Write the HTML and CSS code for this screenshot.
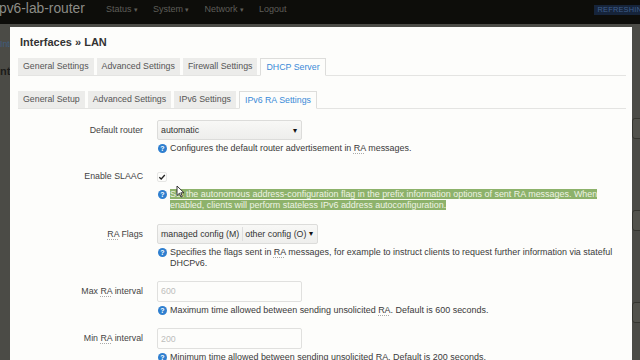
FILE: index.html
```html
<!DOCTYPE html>
<html lang="en">
  <head>
    <meta charset="UTF-8" />
    <meta name="viewport" content="width=device-width, initial-scale=1.0" />
    <title>Interfaces - LAN - LuCI</title>
    <link rel="stylesheet" href="styles.css">
  </head>
  <body>
    <header class="topbar">
      <span class="brand">pv6-lab-router</span>
      <nav class="menu">
        <a>Status <span class="caret">▾</span></a>
        <a>System <span class="caret">▾</span></a>
        <a>Network <span class="caret">▾</span></a>
        <a>Logout</a>
      </nav>
      <span class="refreshing">Refreshing</span>
    </header>

    <div class="page">
      <div class="page-left">
        <div class="crumb">Interfaces</div>
        <div class="page-title">nterfaces</div>
      </div>
      <div class="page-right">
        <div class="ghost"></div>
        <div class="ghost"></div>
        <div class="ghost"></div>
      </div>
    </div>

    <div class="modal">
      <h3>Interfaces » LAN</h3>
      <ul class="tabs">
        <li class="tab">General Settings</li>
        <li class="tab">Advanced Settings</li>
        <li class="tab">Firewall Settings</li>
        <li class="tab active">DHCP Server</li>
      </ul>
      <ul class="tabs sub">
        <li class="tab">General Setup</li>
        <li class="tab">Advanced Settings</li>
        <li class="tab">IPv6 Settings</li>
        <li class="tab active">IPv6 RA Settings</li>
      </ul>

      <div class="form">
        <div class="row">
          <label class="row-label">Default router</label>
          <div class="row-value">
            <div class="select">
              <span>automatic</span>
              <span class="arrow">▾</span>
            </div>
            <div class="desc">
              <span class="help">?</span>
              <div>Configures the default router advertisement in <abbr>RA</abbr> messages.</div>
            </div>
          </div>
        </div>

        <div class="row">
          <label class="row-label">Enable SLAAC</label>
          <div class="row-value">
            <div class="field">
              <span class="checkbox">
                <svg width="8" height="8" viewBox="0 0 8 8"><path d="M1.3 4.2 L3.2 6 L6.8 2" fill="none" stroke="#222" stroke-width="1.3"/></svg>
              </span>
            </div>
            <div class="desc">
              <span class="help">?</span>
              <div><span class="selected">Set the autonomous address-configuration flag in the prefix information options of sent RA messages. When enabled, clients will perform stateless IPv6 address autoconfiguration.</span></div>
            </div>
          </div>
        </div>

        <div class="row">
          <label class="row-label"><abbr>RA</abbr> Flags</label>
          <div class="row-value">
            <div class="select multi">
              <span class="chip">managed config (M)</span>
              <span class="chip">other config (O)</span>
              <span class="arrow">▾</span>
            </div>
            <div class="desc">
              <span class="help">?</span>
              <div>Specifies the flags sent in <abbr>RA</abbr> messages, for example to instruct clients to request further information via stateful DHCPv6.</div>
            </div>
          </div>
        </div>

        <div class="row">
          <label class="row-label">Max <abbr>RA</abbr> interval</label>
          <div class="row-value">
            <input class="text" type="text" placeholder="600" />
            <div class="desc">
              <span class="help">?</span>
              <div>Maximum time allowed between sending unsolicited <abbr>RA</abbr>. Default is 600 seconds.</div>
            </div>
          </div>
        </div>

        <div class="row">
          <label class="row-label">Min <abbr>RA</abbr> interval</label>
          <div class="row-value">
            <input class="text" type="text" placeholder="200" />
            <div class="desc">
              <span class="help">?</span>
              <div>Minimum time allowed between sending unsolicited <abbr>RA</abbr>. Default is 200 seconds.</div>
            </div>
          </div>
        </div>
      </div>
    </div>

    <!-- mouse pointer left over the selection -->
    <svg class="pointer" width="9" height="13" viewBox="0 0 9 13">
      <path d="M1 1 L1 10.5 L3.4 8.3 L5 12 L6.4 11.4 L4.8 7.8 L8 7.8 Z" fill="#fff" stroke="#222" stroke-width="0.9"/>
    </svg>
  </body>
</html>
```

FILE: styles.css
```css
body {
  font-family: "Liberation Sans", Arial, sans-serif;
  background-color: #4b4b46;
  margin: 0;
  width: 640px;
  height: 360px;
  overflow: hidden;
  color: #3a3a3a;
}
.topbar {
  display: flex;
  align-items: flex-start;
  height: 24px;
  background-color: #0d0d0a;
  box-sizing: border-box;
  padding-top: 1px;
}
.brand {
  font-size: 13.8px;
  line-height: 15px;
  color: #8c8c86;
  margin-left: -1px;
}
.menu {
  display: flex;
  gap: 15px;
  margin-left: 21px;
  padding-top: 3px;
}
.menu a {
  font-size: 9px;
  line-height: 10px;
  color: #5e5e59;
}
.caret {
  font-size: 7px;
}
.refreshing {
  margin-left: auto;
  margin-top: 4px;
  margin-right: -12px;
  background-color: #16243a;
  color: #3f5f8c;
  font-size: 7.4px;
  line-height: 10px;
  padding: 0 4px;
  text-transform: uppercase;
  letter-spacing: 0.2px;
}
.page {
  display: flex;
  justify-content: space-between;
}
.page-left {
  padding-top: 15px;
}
.crumb {
  font-size: 8.8px;
  color: #3f5d80;
  line-height: 10px;
}
.page-title {
  font-size: 11px;
  font-weight: bold;
  color: #1c1c1a;
  margin-top: 16px;
}
.page-right {
  display: flex;
  flex-direction: column;
  gap: 71px;
  padding-top: 94px;
  margin-right: -6px;
}
.ghost {
  width: 12px;
  height: 19px;
  border: 1px solid #35352f;
  border-radius: 3px;
  background-color: #52524c;
}

.modal {
  position: absolute;
  left: 10px;
  top: 27px;
  width: 622px;
  bottom: 0;
  background-color: #fdfdfb;
  padding: 0 6px 0 8px;
  box-sizing: border-box;
}
.modal h3 {
  font-size: 11px;
  line-height: 13px;
  font-weight: bold;
  color: #333;
  margin: 9px 0 0 2px;
}
.tabs {
  display: flex;
  gap: 3px;
  list-style: none;
  margin: 9px 0 0;
  padding: 0;
  border-bottom: 1px solid #e4e4e2;
}
.tabs.sub {
  margin-top: 15px;
}
.tab {
  font-size: 8.8px;
  line-height: 17px;
  height: 17px;
  padding: 0 5px;
  background-color: #ececea;
  color: #555;
  white-space: nowrap;
}
.tab.active {
  background-color: #fdfdfb;
  color: #3a8ad8;
  border: 1px solid #dddddb;
  border-bottom-color: #fdfdfb;
  margin-bottom: -1px;
  height: 16px;
  line-height: 16px;
  padding: 0 5px;
}

.form {
  margin-top: 11px;
}
.row {
  display: flex;
  gap: 14px;
  margin-bottom: 12.3px;
}
.row-label {
  width: 125px;
  flex-shrink: 0;
  text-align: right;
  font-size: 8.8px;
  line-height: 20px;
  color: #444;
}
.row-value {
  flex: 1;
}
abbr {
  text-decoration: underline dotted #aaa;
  text-underline-offset: 2px;
}
.select {
  display: flex;
  align-items: center;
  width: 145px;
  height: 20px;
  box-sizing: border-box;
  border: 1px solid #dcdcda;
  border-radius: 2px;
  background: linear-gradient(#f8f8f6, #eeeeec);
  padding: 0 4px 0 3px;
  font-size: 8.8px;
  color: #333;
}
.arrow {
  margin-left: auto;
  font-size: 8px;
  color: #111;
}
.select.multi {
  width: 161px;
  padding-left: 2px;
}
.chip {
  padding: 0 2px 0 1px;
  line-height: 14px;
}
.chip + .chip {
  border-left: 1px solid #dedede;
  margin-left: 1px;
  padding-left: 2px;
}
.field {
  height: 20px;
  display: flex;
  align-items: center;
}
.checkbox {
  display: flex;
  align-items: center;
  justify-content: center;
  width: 10px;
  height: 10px;
  box-sizing: border-box;
  border: 1px solid #e6e6e4;
  border-radius: 2px;
  margin-top: 1px;
}
.text {
  display: block;
  width: 145px;
  height: 21px;
  box-sizing: border-box;
  border: 1px solid #e0e0de;
  border-radius: 2px;
  background-color: #fdfdfb;
  padding: 0 3px;
  margin: 0;
  font-family: "Liberation Sans", Arial, sans-serif;
  font-size: 8.8px;
}
.text::placeholder {
  color: #bdbdbb;
}
.desc {
  display: flex;
  gap: 3px;
  margin-top: 3px;
  font-size: 8.95px;
  line-height: 11px;
  color: #3a3a3a;
  padding-left: 1px;
}
.help {
  flex-shrink: 0;
  width: 9px;
  height: 9px;
  margin-top: 1px;
  border-radius: 50%;
  background-color: #2f7fcf;
  color: #fff;
  font-size: 7px;
  font-weight: bold;
  line-height: 9px;
  text-align: center;
}
.selected {
  background-color: #8db26b;
  color: #eef3e4;
}
.pointer {
  position: absolute;
  left: 176px;
  top: 185px;
}
```
